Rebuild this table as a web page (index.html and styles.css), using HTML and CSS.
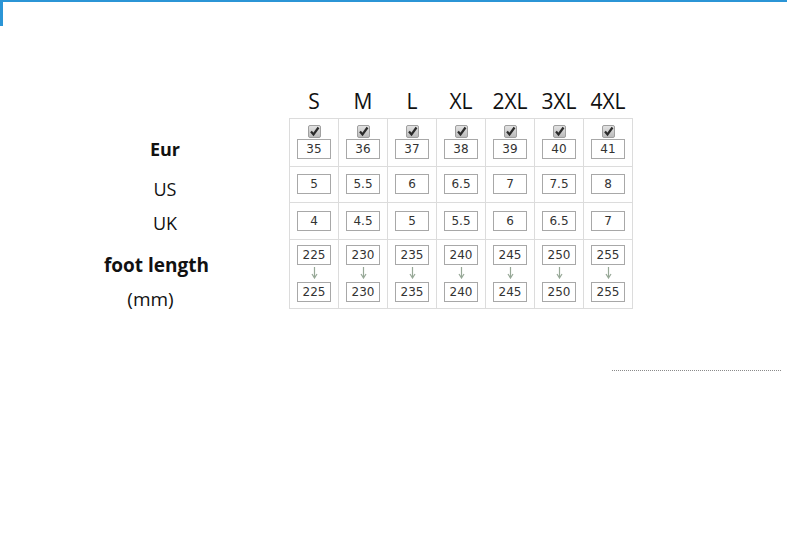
FILE: index.html
```html
<!DOCTYPE html>
<html>
<head>
<meta charset="utf-8">
<link rel="stylesheet" href="styles.css">
</head>
<body>
<div class="frame">
  <div class="tab"></div>
  <div class="content">
    <table class="chart">
      <tr class="head">
        <td class="label"></td>
        <th>S</th><th>M</th><th>L</th><th>XL</th><th>2XL</th><th>3XL</th><th>4XL</th>
      </tr>
      <tr class="eur">
        <td class="label"><span class="lab bold">Eur</span></td>
        <td class="cell"><span class="chk"><svg width="13" height="13" viewBox="0 0 13 13"><path d="M3 6.5 L5.5 9.5 L10.5 2.5" fill="none" stroke="#2b2b2b" stroke-width="2.2"/></svg></span><span class="box">35</span></td>
        <td class="cell"><span class="chk"><svg width="13" height="13" viewBox="0 0 13 13"><path d="M3 6.5 L5.5 9.5 L10.5 2.5" fill="none" stroke="#2b2b2b" stroke-width="2.2"/></svg></span><span class="box">36</span></td>
        <td class="cell"><span class="chk"><svg width="13" height="13" viewBox="0 0 13 13"><path d="M3 6.5 L5.5 9.5 L10.5 2.5" fill="none" stroke="#2b2b2b" stroke-width="2.2"/></svg></span><span class="box">37</span></td>
        <td class="cell"><span class="chk"><svg width="13" height="13" viewBox="0 0 13 13"><path d="M3 6.5 L5.5 9.5 L10.5 2.5" fill="none" stroke="#2b2b2b" stroke-width="2.2"/></svg></span><span class="box">38</span></td>
        <td class="cell"><span class="chk"><svg width="13" height="13" viewBox="0 0 13 13"><path d="M3 6.5 L5.5 9.5 L10.5 2.5" fill="none" stroke="#2b2b2b" stroke-width="2.2"/></svg></span><span class="box">39</span></td>
        <td class="cell"><span class="chk"><svg width="13" height="13" viewBox="0 0 13 13"><path d="M3 6.5 L5.5 9.5 L10.5 2.5" fill="none" stroke="#2b2b2b" stroke-width="2.2"/></svg></span><span class="box">40</span></td>
        <td class="cell"><span class="chk"><svg width="13" height="13" viewBox="0 0 13 13"><path d="M3 6.5 L5.5 9.5 L10.5 2.5" fill="none" stroke="#2b2b2b" stroke-width="2.2"/></svg></span><span class="box">41</span></td>
      </tr>
      <tr class="us">
        <td class="label"><span class="lab">US</span></td>
        <td class="cell"><span class="box">5</span></td>
        <td class="cell"><span class="box">5.5</span></td>
        <td class="cell"><span class="box">6</span></td>
        <td class="cell"><span class="box">6.5</span></td>
        <td class="cell"><span class="box">7</span></td>
        <td class="cell"><span class="box">7.5</span></td>
        <td class="cell"><span class="box">8</span></td>
      </tr>
      <tr class="uk">
        <td class="label"><span class="lab">UK</span></td>
        <td class="cell"><span class="box">4</span></td>
        <td class="cell"><span class="box">4.5</span></td>
        <td class="cell"><span class="box">5</span></td>
        <td class="cell"><span class="box">5.5</span></td>
        <td class="cell"><span class="box">6</span></td>
        <td class="cell"><span class="box">6.5</span></td>
        <td class="cell"><span class="box">7</span></td>
      </tr>
      <tr class="foot">
        <td class="label"><span class="lab bold foot-l">foot length</span><span class="lab mm">(mm)</span></td>
        <td class="cell"><span class="box">225</span><span class="arrow"><svg width="7" height="12" viewBox="0 0 7 12"><path d="M3.5 0 V10 M1 7 L3.5 11 L6 7" fill="none" stroke="#97a897" stroke-width="1.2"/></svg></span><span class="box">225</span></td>
        <td class="cell"><span class="box">230</span><span class="arrow"><svg width="7" height="12" viewBox="0 0 7 12"><path d="M3.5 0 V10 M1 7 L3.5 11 L6 7" fill="none" stroke="#97a897" stroke-width="1.2"/></svg></span><span class="box">230</span></td>
        <td class="cell"><span class="box">235</span><span class="arrow"><svg width="7" height="12" viewBox="0 0 7 12"><path d="M3.5 0 V10 M1 7 L3.5 11 L6 7" fill="none" stroke="#97a897" stroke-width="1.2"/></svg></span><span class="box">235</span></td>
        <td class="cell"><span class="box">240</span><span class="arrow"><svg width="7" height="12" viewBox="0 0 7 12"><path d="M3.5 0 V10 M1 7 L3.5 11 L6 7" fill="none" stroke="#97a897" stroke-width="1.2"/></svg></span><span class="box">240</span></td>
        <td class="cell"><span class="box">245</span><span class="arrow"><svg width="7" height="12" viewBox="0 0 7 12"><path d="M3.5 0 V10 M1 7 L3.5 11 L6 7" fill="none" stroke="#97a897" stroke-width="1.2"/></svg></span><span class="box">245</span></td>
        <td class="cell"><span class="box">250</span><span class="arrow"><svg width="7" height="12" viewBox="0 0 7 12"><path d="M3.5 0 V10 M1 7 L3.5 11 L6 7" fill="none" stroke="#97a897" stroke-width="1.2"/></svg></span><span class="box">250</span></td>
        <td class="cell"><span class="box">255</span><span class="arrow"><svg width="7" height="12" viewBox="0 0 7 12"><path d="M3.5 0 V10 M1 7 L3.5 11 L6 7" fill="none" stroke="#97a897" stroke-width="1.2"/></svg></span><span class="box">255</span></td>
      </tr>
    </table>
    <div class="rule"></div>
  </div>
</div>
</body>
</html>
```

FILE: styles.css
```css
html, body {
  margin: 0;
  padding: 0;
  background: #fff;
}
body {
  width: 787px;
  height: 537px;
  overflow: hidden;
  font-family: "Open Sans", "Noto Sans", sans-serif;
  color: #111;
}
.frame {
  border-top: 2px solid #2b95d6;
  display: flex;
  align-items: flex-start;
}
.tab {
  width: 3px;
  height: 24px;
  background: #2b95d6;
  flex: none;
}
.content {
  flex: 1;
  margin-left: -3px;
  padding-top: 84px;
}
.chart {
  border-collapse: collapse;
  table-layout: fixed;
}
.chart td, .chart th {
  padding: 0;
}
.head th {
  width: 49px;
  height: 32px;
  font-weight: normal;
  font-size: 21px;
  color: #111;
  text-align: center;
  vertical-align: top;
  line-height: 30px;
  border: none;
  white-space: nowrap;
}
.label {
  width: 289px;
  border: none;
  text-align: center;
  vertical-align: top;
}
.lab {
  display: block;
  font-size: 18px;
  line-height: 20px;
  padding-left: 41px;
}
.bold {
  font-weight: bold;
}
.cell {
  border: 1px solid #dcdcdc;
  text-align: center;
  vertical-align: top;
}
.box {
  display: block;
  width: 32px;
  height: 18px;
  margin: 0 auto;
  border: 1px solid #a8a8a8;
  font-family: "DejaVu Sans", sans-serif;
  font-size: 12px;
  line-height: 19px;
  color: #333;
  background: #fff;
}
.chk {
  display: block;
  width: 13px;
  height: 13px;
  margin: 0 auto 1px;
  border: 1px solid #a0a0a0;
  border-radius: 2px;
  box-sizing: border-box;
  background: linear-gradient(#e2e2e2, #bcbcbc);
  line-height: 0;
}
.chk svg {
  margin: -1px 0 0 -1px;
}
.eur .cell {
  height: 41px;
  padding-top: 6px;
}
.eur .lab {
  padding-top: 20px;
}
.us .cell {
  height: 28px;
  padding-top: 7px;
}
.us .lab {
  padding-top: 12px;
}
.uk .cell {
  height: 28px;
  padding-top: 8px;
}
.uk .lab {
  padding-top: 10px;
}
.foot .cell {
  height: 63px;
  padding-top: 5px;
}
.arrow {
  display: block;
  height: 12px;
  margin: 2px 0 3px;
  line-height: 0;
}
.foot-l {
  font-size: 19px;
  padding-top: 15px;
  padding-left: 24px;
}
.mm {
  font-size: 19px;
  padding-top: 14px;
  padding-left: 12px;
}
.rule {
  margin: 61px 0 0 612px;
  width: 169px;
  border-top: 1px dotted #8a8a8a;
}
```
